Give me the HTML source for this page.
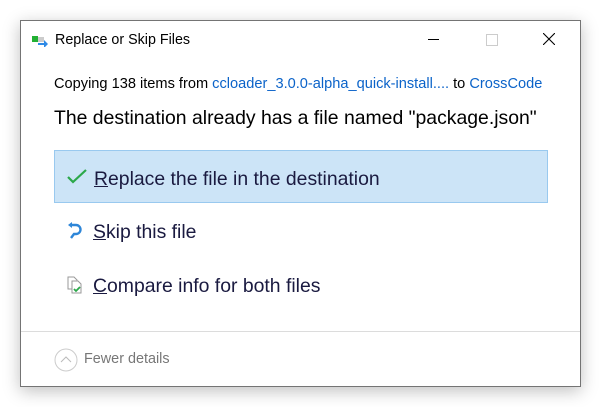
<!DOCTYPE html>
<html><head><style>
body{margin:0;width:601px;height:407px;background:#fff;position:relative;font-family:"Segoe UI","Liberation Sans",sans-serif;overflow:hidden}
.win{position:absolute;left:20px;top:20px;width:559px;height:365px;border:1px solid #747474;background:#fff;box-shadow:0 4px 16px rgba(0,0,0,0.25)}
.t{position:absolute;white-space:nowrap}
a{color:#0b63c9;text-decoration:none}
.opt{position:absolute;left:33px;width:494px;height:53px;font-size:19.4px;color:#1a1a40}
.opt span.l{position:absolute;left:39px;top:17px}
u{text-decoration:underline}
</style></head><body>
<div class="win">
<svg style="position:absolute;left:11px;top:14px" width="18" height="12"><rect x="0" y="1" width="6" height="6" fill="#22b033"/><rect x="6" y="2" width="6" height="5" fill="#ccc"/><path d="M6 8h6V5l4 4-4 4v-3H6z" fill="#2e8ae6"/></svg>
<div class="t" style="left:34px;top:11px;font-size:14.3px;color:#000">Replace or Skip Files</div>
<div style="position:absolute;left:407px;top:18px;width:11px;height:1px;background:#000"></div>
<div style="position:absolute;left:465px;top:13px;width:10px;height:10px;border:1px solid #ccc"></div>
<svg style="position:absolute;left:522px;top:12px" width="12" height="12"><path d="M0 0L12 12M12 0L0 12" stroke="#000" stroke-width="1.1"/></svg>
<div class="t" style="left:33px;top:55px;font-size:14.6px;color:#000">Copying 138 items from <a>ccloader_3.0.0-alpha_quick-install....</a> to <a>CrossCode</a></div>
<div class="t" style="left:33px;top:86px;font-size:19.4px;color:#000">The destination already has a file named "package.json"</div>
<div class="opt" style="top:129px;background:#cce4f7;border:1px solid #99c9ef;box-sizing:border-box">
<svg style="position:absolute;left:12px;top:18px" width="20" height="16"><path d="M1 8l5 5L19 1" stroke="#2ba84a" stroke-width="2.2" fill="none"/></svg>
<span class="l"><u>R</u>eplace the file in the destination</span></div>
<div class="opt" style="top:183px">
<svg style="position:absolute;left:13px;top:17px" width="16" height="20"><path d="M3 4h6a4.5 4.5 0 0 1 0 9H7l-3 4" stroke="#2e86d8" stroke-width="2.4" fill="none"/><path d="M1 4l4-3v6z" fill="#2e86d8"/></svg>
<span class="l"><u>S</u>kip this file</span></div>
<div class="opt" style="top:237px">
<svg style="position:absolute;left:13px;top:18px" width="18" height="18"><path d="M1 1h6l3 3v9H1z" fill="#fff" stroke="#999"/><path d="M5 5h6l3 3v9H5z" fill="#fff" stroke="#999"/><path d="M7 13l2 2 4-4" stroke="#2ba84a" stroke-width="1.8" fill="none"/></svg>
<span class="l"><u>C</u>ompare info for both files</span></div>
<div style="position:absolute;left:0;top:310px;width:559px;height:1px;background:#dcdcdc"></div>
<svg style="position:absolute;left:33px;top:327px" width="24" height="24"><circle cx="12" cy="12" r="11" fill="none" stroke="#ccc"/><path d="M7 14l5-5 5 5" stroke="#bbb" fill="none"/></svg>
<div class="t" style="left:63px;top:330px;font-size:14.4px;color:#777">Fewer details</div>
</div>
</body></html>
